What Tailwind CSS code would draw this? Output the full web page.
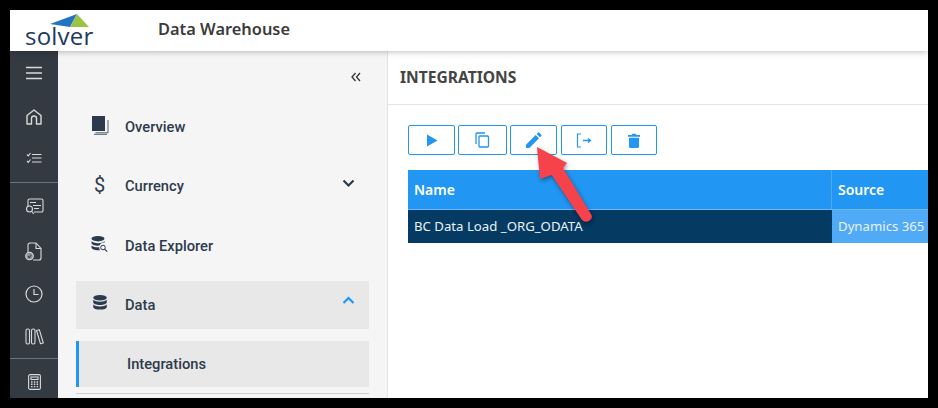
<!DOCTYPE html>
<html>
<head>
<meta charset="utf-8">
<script src="https://cdn.jsdelivr.net/npm/@tailwindcss/browser@4"></script>
</head>
<body class="bg-black">
<div class="relative w-[938px] h-[408px] bg-black p-[10px] overflow-hidden">
  <div class="w-[918px] h-[388px] bg-white flex flex-col overflow-hidden relative">
    <header class="relative z-10 h-[41px] shrink-0 bg-white shadow-[0_1px_6px_rgba(0,0,0,0.25)] flex items-center">
      <div class="relative w-[148px] h-[41px] shrink-0">
        <svg class="absolute left-[40px] top-[3px]" width="40" height="15" viewBox="0 0 40 15">
          <path d="M0 11 L27 1 L20 14 Z" fill="#2273c3"/>
          <path d="M27 1 L39 14 L20 14 Z" fill="#9cc444"/>
        </svg>
        <span class="absolute left-[15px] top-[10px] font-['Open_Sans',sans-serif] font-normal text-[24px] leading-[32px] tracking-[0.2px] text-[#1f3a5c]">solver</span>
      </div>
      <span class="font-['Noto_Sans',sans-serif] font-semibold text-[16.4px] text-[#3b3b3b] -mt-[2px]">Data Warehouse</span>
    </header>
    <div class="flex flex-1 min-h-0">
      <aside class="w-[48px] shrink-0 bg-[#343a42] flex flex-col items-center text-[#d8dadc] overflow-hidden">
        <div class="h-[44px] shrink-0 flex items-center justify-center w-full">
          <svg width="18" height="14" viewBox="0 0 18 14" stroke="currentColor" stroke-width="1.3" fill="none"><path d="M1 1.500h16M1 7h16M1 12.500h16"/></svg>
        </div>
        <div class="h-[44px] shrink-0 flex items-center justify-center w-full">
          <svg width="18" height="18" viewBox="0 0 18 18" stroke="currentColor" stroke-width="1.400" fill="none"><path d="M2 16V7.500L9 2l7 5.500V16h-4.500v-5.500a2.500 2.500 0 0 0-5 0V16Z" stroke-linejoin="round"/></svg>
        </div>
        <div class="h-[44px] shrink-0 flex items-center justify-center w-full border-b border-[#6d7278] pb-[6px]">
          <svg width="16" height="12" viewBox="0 0 16 12" stroke="currentColor" stroke-width="1.100" fill="none"><path d="M1 2.500l1.300 1.300L4.500 1M1 9l1.300 1.300L4.500 7.500M6 2.500h9.500M6 6h9.500M6 10h9.500"/></svg>
        </div>
        <div class="h-[47px] shrink-0 flex items-center justify-center w-full">
          <svg width="19" height="17" viewBox="0 0 19 17" stroke="currentColor" stroke-width="1.100" fill="none"><path d="M3 9V2.500a1.500 1.500 0 0 1 1.500-1.500h12A1.500 1.500 0 0 1 18 2.500v10a1.500 1.500 0 0 1-1.500 1.500H9"/><path d="M5 4.500h6M8 7.500h8M9 10.500h5"/><circle cx="4.500" cy="11" r="3"/><path d="M6.800 13.500l2 2.300"/></svg>
        </div>
        <div class="h-[43px] shrink-0 flex items-center justify-center w-full">
          <svg width="18" height="19" viewBox="0 0 18 19" stroke="currentColor" stroke-width="1.100" fill="none"><path d="M3 10V3a2 2 0 0 1 2-2h6l5 5.500V16a2 2 0 0 1-2 2H8"/><path d="M11 1v5.500h5"/><circle cx="4.500" cy="14" r="3.800" fill="currentColor" fill-opacity=".55"/><path d="M3 14.500l1.200 1 2-2.500" stroke="#343a42"/></svg>
        </div>
        <div class="h-[42px] shrink-0 flex items-center justify-center w-full">
          <svg width="18" height="18" viewBox="0 0 18 18" stroke="currentColor" stroke-width="1.200" fill="none"><circle cx="9" cy="9" r="8"/><path d="M9 4v5.500h4.500"/></svg>
        </div>
        <div class="h-[44px] shrink-0 flex items-center justify-center w-full border-b border-[#6d7278]">
          <svg width="19" height="17" viewBox="0 0 19 17" stroke="currentColor" stroke-width="1.100" fill="none"><rect x="1" y="1" width="3.500" height="15" rx="1.500"/><rect x="6.500" y="1" width="3.500" height="15" rx="1.500"/><path d="M11.500 2.500l2.800-.8 4 13.300-2.800.8Z" stroke-linejoin="round"/></svg>
        </div>
        <div class="h-[46px] shrink-0 flex items-center justify-center w-full">
          <svg width="13" height="16" viewBox="0 0 13 16" stroke="currentColor" stroke-width="1.100" fill="none"><rect x=".6" y=".6" width="11.800" height="14.800" rx="1.500"/><rect x="3" y="3" width="7" height="2.500"/><path d="M3 8h1.500M5.800 8h1.500M8.600 8h1.500M3 10.300h1.500M5.800 10.300h1.500M8.600 10.300h1.500M3 12.600h1.500M5.800 12.600h1.500M8.600 12.600h1.500" stroke-width="1.400"/></svg>
        </div>
      </aside>
      <nav class="relative w-[330px] shrink-0 bg-[#f5f5f5] border-r border-[#e4e4e4] flex flex-col px-[18px] font-['Roboto',sans-serif] font-medium text-[14.7px] text-[#2e3a4b] overflow-hidden">
        <div class="h-[52px] shrink-0 flex items-start justify-end pr-[8px] pt-[21px]">
          <svg width="10" height="10" viewBox="0 0 10 10" stroke="#333" stroke-width="1.300" fill="none"><path d="M4.500 1L1 5l3.500 4M9 1L5.500 5 9 9"/></svg>
        </div>
        <div class="h-[50px] shrink-0 flex items-center -mt-[1px]">
          <span class="w-[49px] pl-[16px] shrink-0">
            <svg width="17" height="19" viewBox="0 0 17 19" class="-mt-[3px]"><path d="M3.500 16.800H16V4" stroke="#2d3a4e" fill="none" stroke-width=".8"/><path d="M2 18.300H15" stroke="#2d3a4e" stroke-width=".8"/><rect x="0" y="0" width="13" height="15" fill="#2d3a4e"/></svg>
          </span>Overview
        </div>
        <div class="h-[59px] shrink-0 flex items-center relative top-[5px]">
          <span class="w-[49px] pl-[18px] shrink-0 text-[20px] leading-none font-normal -mt-[4px]">$</span>Currency
          <svg class="absolute right-[14px] top-[22px]" width="13" height="9" viewBox="0 0 13 9" stroke="#2d3a4e" stroke-width="2.200" fill="none"><path d="M1.500 1.500L6.500 6.500 11.500 1.500"/></svg>
        </div>
        <div class="h-[60px] shrink-0 flex items-center relative top-[5px]">
          <span class="w-[49px] pl-[15px] shrink-0">
            <svg width="18" height="17" viewBox="0 0 18 17" class="-mt-[4px]"><ellipse cx="7" cy="2.700" rx="6.500" ry="2.700" fill="#2d3a4e"/><path d="M.5 5v2c0 1.500 3 2.700 6.500 2.700.5 0 1 0 1.500-.1A4.500 4.500 0 0 1 12 6.500l1.500.2V5c-1 1.400-3.500 2.200-6.500 2.200S1.500 6.400.5 5ZM.5 9.500v2C.5 13 3.500 14.200 7 14.200h2A5 5 0 0 1 8.200 11.200C5 11.400 1.800 11 .5 9.500Z" fill="#2d3a4e"/><circle cx="12" cy="11.500" r="2.300" fill="none" stroke="#2d3a4e" stroke-width="1"/><path d="M13.700 13.200l2.500 2.500" stroke="#2d3a4e" stroke-width="1.200"/></svg>
          </span>Data Explorer
        </div>
        <div class="h-[48px] shrink-0 flex items-center bg-[#e8e8e8] relative mt-[10px]">
          <span class="w-[49px] pl-[17px] shrink-0">
            <svg width="14" height="15" viewBox="0 0 14 15" class="-mt-[5px]"><ellipse cx="7" cy="2.800" rx="6.800" ry="2.800" fill="#2d3a4e"/><path d="M.2 4.800v2.400c0 1.500 3 2.700 6.800 2.700s6.800-1.200 6.800-2.700V4.800c-1.200 1.300-3.800 2-6.800 2s-5.600-.7-6.800-2ZM.2 9.500v2.400C.2 13.400 3.200 14.600 7 14.600s6.800-1.200 6.800-2.700V9.500c-1.200 1.300-3.800 2-6.800 2s-5.600-.7-6.800-2Z" fill="#2d3a4e"/></svg>
          </span>Data
          <svg class="absolute right-[14px] top-[15px]" width="13" height="9" viewBox="0 0 13 9" stroke="#2196f3" stroke-width="2.200" fill="none"><path d="M1.500 7L6.500 2 11.500 7"/></svg>
        </div>
        <div class="h-[46px] mt-[12px] shrink-0 flex items-center bg-[#e8e8e8] border-l-[3px] border-[#2196f3] pl-[48px]">Integrations</div>
        <div class="h-px mt-[6px] bg-[#cfcfcf] shrink-0"></div>
      </nav>
      <main class="flex-1 min-w-0 flex flex-col bg-white">
        <div class="h-[54px] shrink-0 border-b border-[#e4e4e4] flex items-center pl-[12px] pt-[1px] font-['Noto_Sans',sans-serif] font-bold text-[15.6px] text-[#444]">INTEGRATIONS</div>
        <div class="pt-[20px] pl-[20px]">
          <div class="flex h-[30px] text-[#2196f3]">
            <button class="w-[47px] border border-[#2196f3] rounded-[2px] flex items-center justify-center"><svg width="12" height="13" viewBox="0 0 12 13" fill="currentColor"><path d="M1 .5L11.500 6.500 1 12.500Z"/></svg></button>
            <button class="w-[49px] ml-[3px] border border-[#2196f3] rounded-[2px] flex items-center justify-center"><svg width="15" height="16" viewBox="0 0 15 16" stroke="currentColor" stroke-width="1.300" fill="none"><path d="M1 12V2a1 1 0 0 1 1-1h8"/><rect x="4" y="4" width="9.500" height="11" rx="1"/></svg></button>
            <button class="w-[47px] ml-[3px] border border-[#2196f3] rounded-[2px] flex items-center justify-center"><svg width="16" height="16" viewBox="0 0 24 24" fill="currentColor"><path d="M0 24v-5L14.500 4.500l5 5L5 24ZM16 3l2-2a1.500 1.500 0 0 1 2 0l3 3a1.500 1.500 0 0 1 0 2l-2 2Z"/></svg></button>
            <button class="w-[46px] ml-[4px] border border-[#2196f3] rounded-[2px] flex items-center justify-center"><svg width="16" height="15" viewBox="0 0 16 15" stroke="currentColor" stroke-width="1.200" fill="none"><path d="M5 1H1.500v13H5"/><path d="M7 7.500h7M12 5.500l2.500 2-2.500 2" stroke-width="1.300"/></svg></button>
            <button class="w-[46px] ml-[4px] border border-[#2196f3] rounded-[2px] flex items-center justify-center"><svg width="12" height="15" viewBox="0 0 12 15" fill="currentColor"><path d="M0 2h3.500L4.500.8h3L8.500 2H12v1.700H0ZM1 4.700h10V13.500A1.500 1.500 0 0 1 9.500 15h-7A1.500 1.500 0 0 1 1 13.500Z"/></svg></button>
          </div>
          <div class="mt-[15px] w-[520px] font-['Noto_Sans',sans-serif]">
            <div class="flex h-[40px] bg-[#2196f3] text-white font-semibold text-[14px] border-b border-[#6db8f5]">
              <div class="w-[424px] shrink-0 pl-[6px] flex items-center border-r border-[#4daaf5]">Name</div>
              <div class="pl-[6px] flex items-center">Source</div>
            </div>
            <div class="flex h-[33px] text-[13.2px] text-[#e8f2fa]">
              <div class="w-[424px] shrink-0 pl-[6px] flex items-center bg-[#053a63]">BC Data Load _ORG_ODATA</div>
              <div class="flex-1 pl-[6px] flex items-center bg-[#51aaf5]">Dynamics 365</div>
            </div>
          </div>
        </div>
      </main>
    </div>
  </div>
  <svg class="absolute left-[530px] top-[140px] drop-shadow-[1px_2px_2px_rgba(0,0,0,0.4)]" width="70" height="90" viewBox="0 0 70 90">
    <path d="M7 7 L37 23 L33 28 L61.500 75 Q63 79 59 81 Q55 83 52 80 L21.700 35 L10 39 Z" fill="#f5424b"/>
  </svg>
</div>
</body>
</html>
